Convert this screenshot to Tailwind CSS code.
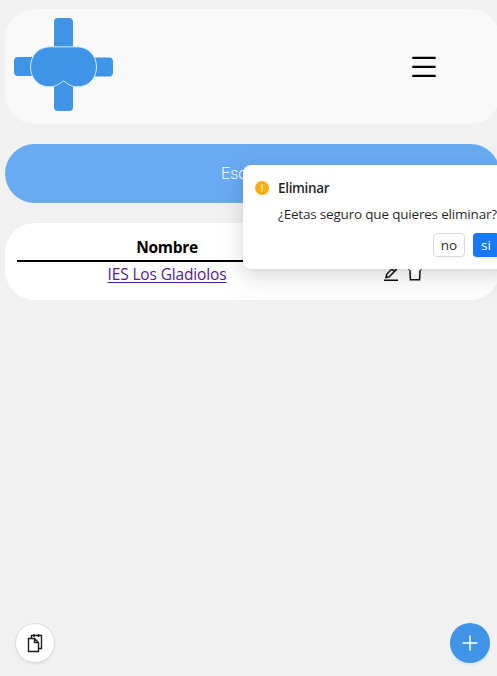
<!DOCTYPE html>
<html lang="es">
<head>
<meta charset="utf-8">
<title>Escuelas</title>
<script src="https://cdn.jsdelivr.net/npm/@tailwindcss/browser@4"></script>
</head>
<body class="relative h-[676px] overflow-hidden bg-[#f1f1f1] font-['Segoe_UI','Open_Sans',sans-serif] text-black">
<div class="flex w-[500px] flex-col gap-5 pt-[9px] pl-[5px]">
  <header class="flex h-[115px] items-start justify-between rounded-[30px] bg-[#f9f9f9] pt-[8px] pr-[64px] pl-[8px]">
    <svg class="h-[96px] w-[102px]" viewBox="13 17 102 96" fill="#3f94e8">
      <rect x="54" y="18" width="19" height="34" rx="4"/>
      <rect x="54" y="78" width="19" height="33" rx="4"/>
      <rect x="14" y="57" width="30" height="19" rx="4"/>
      <rect x="83" y="57.500" width="30" height="19" rx="4"/>
      <path d="M50 46.800H77C88.500 46.800 96.500 55.500 96.500 67C96.500 78.500 88.500 86.800 78 86.800C71.500 86.800 67.500 84 63.500 80.800C59.500 84 55.500 86.800 49 86.800C38.500 86.800 30.500 78.500 30.500 67C30.500 55.500 38.500 46.800 50 46.800Z" stroke="#d9edff" stroke-width="1"/>
    </svg>
    <svg class="mt-[37px] h-6 w-6" viewBox="0 0 24 24" fill="none" stroke="#000" stroke-width="2.200"><path d="M.3 3.800H23.600M.3 12.800H23.600M.3 21.800H23.600"/></svg>
  </header>
  <div class="flex h-[59px] items-center justify-center rounded-[30px] bg-[#69abf3] font-[Roboto,sans-serif] text-base font-light text-white">Escuelas</div>
  <main class="h-[77px] rounded-[30px] bg-white px-3 pt-[12px]">
    <div class="grid h-[27px] grid-cols-[300px_170px] border-b-2 border-black text-center text-[15.500px] leading-[25px] font-bold"><span class="tracking-[-0.33px]">Nombre</span><span></span></div>
    <div class="grid h-[26px] grid-cols-[300px_170px] text-center text-[15.500px] leading-[25px]">
      <a class="tracking-[-0.15px] text-[#551a8b] underline decoration-1 underline-offset-2" href="#">IES Los Gladiolos</a>
      <span class="flex items-start gap-2 pt-[3px] pl-[66px]">
        <svg class="h-4 w-4" viewBox="0 0 16 16" fill="none" stroke="#111" stroke-width="1.500"><path d="M1 15.300H15M3 12.500L3.700 9.300L10.600 2.200L13.200 4.700L6.200 11.800ZM8.800 4L11.400 6.600"/></svg>
        <svg class="h-4 w-4" viewBox="0 0 16 16" fill="none" stroke="#111" stroke-width="1.500"><path d="M1 4.200H15M5 4V1.500H11V4M2.900 4.500L3.400 14.800H12.600L13.100 4.500"/></svg>
      </span>
    </div>
  </main>
</div>

<section class="absolute top-[165px] left-[243px] h-[104px] w-[268px] rounded-lg bg-white p-3 text-sm leading-[22px] text-black/88 shadow-[0_6px_16px_0_rgba(0,0,0,0.08),0_3px_6px_-4px_rgba(0,0,0,0.12),0_9px_28px_8px_rgba(0,0,0,0.05)]">
  <svg class="absolute top-[104px] left-[164px] h-2 w-4" viewBox="0 0 16 8" fill="#fff"><path d="M0 0C2.500 0 3.500 1 4.500 2L7 4.600Q8 5.600 9 4.600L11.500 2C12.500 1 13.500 0 16 0Z"/></svg>
  <div class="flex gap-[9px]">
    <svg class="mt-1 h-[14px] w-[14px] shrink-0" viewBox="0 0 14 14"><circle cx="7" cy="7" r="7" fill="#faad14"/><path d="M7 3.500V8" stroke="#fff" stroke-width="1.100"/><circle cx="7" cy="10.100" r=".75" fill="#fff"/></svg>
    <div class="whitespace-nowrap">
      <div class="text-[13.500px] font-semibold tracking-[-0.33px]">Eliminar</div>
      <div class="mt-1 text-[13.500px] tracking-[-0.19px]">¿Eetas seguro que quieres eliminar?</div>
    </div>
  </div>
  <div class="mt-2 flex gap-2 pl-[178px]">
    <button class="h-6 w-8 rounded border border-[#d9d9d9] bg-white text-[13.500px] leading-[22px] shadow-[0_2px_0_rgba(0,0,0,0.02)]">no</button>
    <button class="h-6 w-[26px] rounded bg-[#1677ff] text-[13.500px] leading-6 text-white shadow-[0_2px_0_rgba(5,145,255,0.1)]">si</button>
  </div>
</section>

<button class="absolute top-[623px] left-[15px] flex size-10 items-center justify-center rounded-full border border-[#dcdcdc] bg-white shadow-[0_2px_2px_rgba(0,0,0,0.05)]">
  <svg class="h-5 w-4" viewBox="0 0 16 20" fill="none" stroke="#1d1d1d" stroke-width="1.400"><path d="M1.500 5.500H7.500L11.500 9.500V18.500H1.500ZM7.500 6V9.500H11.500M4.500 5.500V2.500H14.500V15.500H11.500M7 1V4M11.500 1V4"/></svg>
</button>
<button class="absolute top-[623px] left-[450px] flex size-10 items-center justify-center rounded-full bg-[#3f94e8] shadow-[0_2px_2px_rgba(5,145,255,0.12)]">
  <svg class="size-4" viewBox="0 0 16 16" stroke="#fff" stroke-width="1.500"><path d="M.5 8H15.500M8 .5V15.500"/></svg>
</button>
</body>
</html>
